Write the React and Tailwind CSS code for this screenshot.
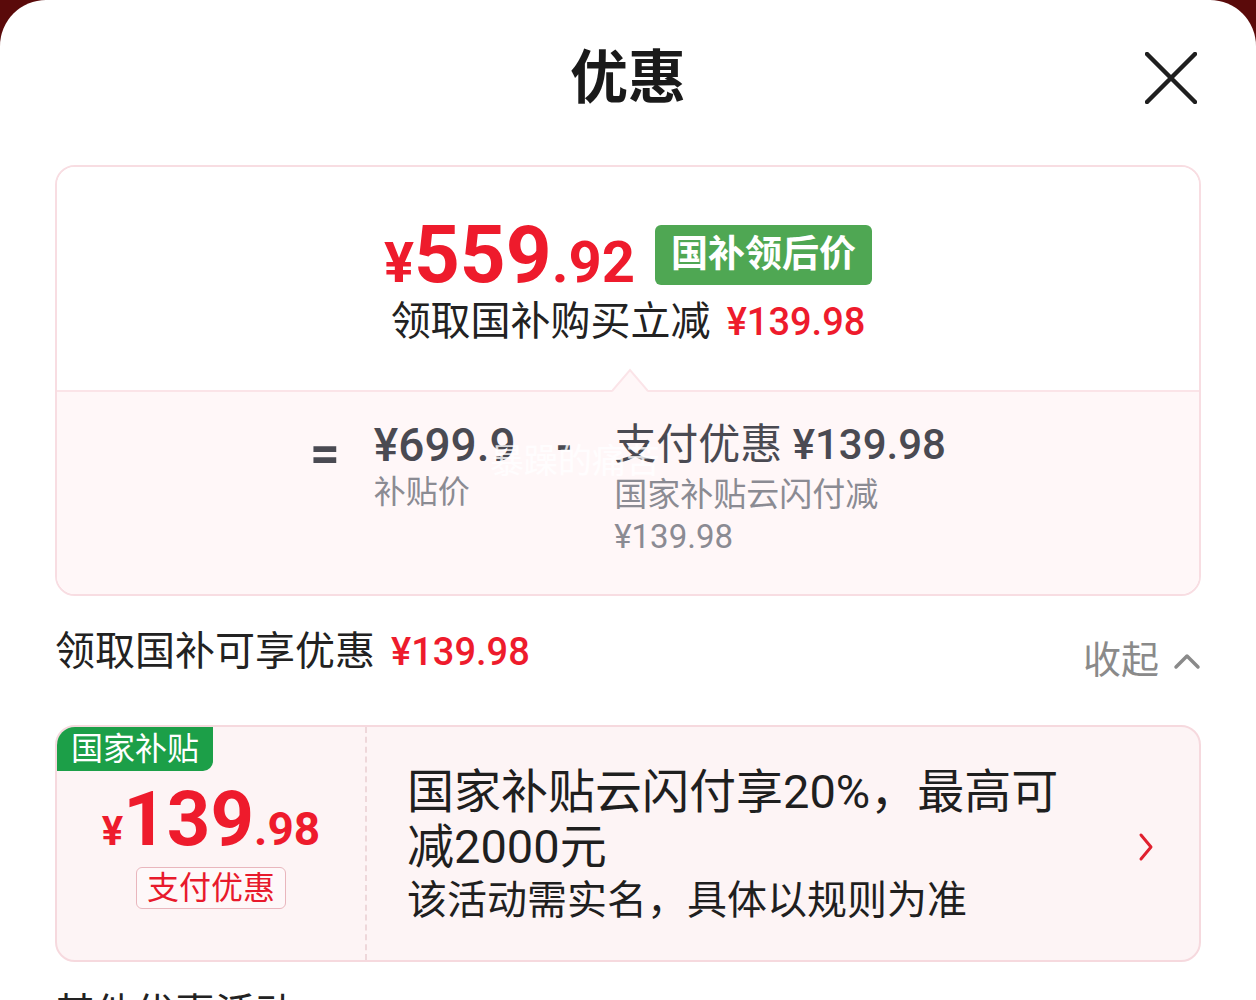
import { useState } from "react";

const Price = ({ big, small, className, yen, bigSize, smallSize }) => (
  <div className={`flex items-baseline font-bold leading-none ${className}`}>
    <span className={yen}>¥</span>
    <span className={bigSize}>{big}</span>
    <span className={smallSize}>{small}</span>
  </div>
);

const CloseIcon = () => (
  <svg width="52" height="52" viewBox="0 0 52 52" fill="none">
    <path d="M2 2 L50 50 M50 2 L2 50" stroke="#1f1f1f" strokeWidth="4.5" strokeLinecap="round" />
  </svg>
);

export default function App() {
  const [open, setOpen] = useState(true);

  return (
    <div className="min-h-screen bg-[#5a0a0a] [font-family:Roboto,'Noto_Sans_CJK_SC',sans-serif]">
      <div className="min-h-[1000px] rounded-t-[46px] bg-white px-[55px]">
        {/* header */}
        <header className="grid h-[156px] grid-cols-[1fr_auto_1fr] items-center">
          <div />
          <h1 className="text-[58px] font-bold text-[#1a1a1a]">优惠</h1>
          <div className="flex justify-end pr-[4px]">
            <button>
              <CloseIcon />
            </button>
          </div>
        </header>

        {/* summary card */}
        <section className="mt-[9px] overflow-hidden rounded-[20px] border-2 border-[#f8dde2]">
          <div className="flex h-[223px] flex-col items-center bg-white pt-[48px]">
            <div className="flex items-center gap-[20px]">
              <Price
                big="559"
                small=".92"
                className="text-[#ee1b2c]"
                yen="text-[56px]"
                bigSize="text-[80px]"
                smallSize="text-[58px]"
              />
              <span className="flex h-[60px] items-center rounded-[6px] bg-[#4fa753] px-[16px] text-[37px] font-bold text-white">
                国补领后价
              </span>
            </div>
            <div className="-mt-[3px] flex items-baseline gap-[16px]">
              <span className="text-[40px] text-[#222]">领取国补购买立减</span>
              <span className="text-[38px] font-medium text-[#ee1b2c]">¥139.98</span>
            </div>
          </div>

          <div className="relative h-[204px] border-t-2 border-[#fbe4e8] bg-[#fff7f8]">
            <svg className="absolute -top-[24px] left-[555px]" width="36" height="24" viewBox="0 0 36 24">
              <path d="M0 24 L18 2 L36 24 Z" fill="#fff7f8" />
              <path d="M0 23 L18 2 L36 23" fill="none" stroke="#fbe4e8" strokeWidth="2" />
            </svg>

            <div className="flex justify-center pt-[28px]">
              <span className="mt-[8px] text-[52px] font-bold leading-none text-[#4a4a52]">=</span>
              <div className="ml-[34px]">
                <div className="text-[46px] font-medium leading-[50px] text-[#4a4a52]">¥699.9</div>
                <div className="text-[32px] leading-[44px] text-[#8b8b93]">补贴价</div>
              </div>
              <span className="ml-[40px] mt-[2px] text-[42px] font-bold leading-[50px] text-[#4a4a52]">-</span>
              <div className="ml-[42px]">
                <div className="text-[42px] leading-[50px] text-[#4a4a52]">
                  支付优惠 <span className="font-medium">¥139.98</span>
                </div>
                <div className="mt-[4px] text-[33px] leading-[42px] text-[#8b8b93]">
                  国家补贴云闪付减
                  <br />
                  ¥139.98
                </div>
              </div>
            </div>

            {/* watermark */}
            <span className="pointer-events-none absolute left-[433px] top-[44px] text-[34px] text-white/80">
              暴躁的痛苦
            </span>
          </div>
        </section>

        {/* subtotal row */}
        <div className="mt-[26px] flex items-start justify-between">
          <div className="flex items-baseline gap-[16px]">
            <span className="text-[40px] text-[#222]">领取国补可享优惠</span>
            <span className="text-[38px] font-medium text-[#ee1b2c]">¥139.98</span>
          </div>
          <button onClick={() => setOpen(!open)} className="mt-[10px] flex items-center gap-[14px] text-[38px] text-[#8a8a8a]">
            收起
            <svg width="28" height="18" viewBox="0 0 28 18" fill="none">
              <path d="M3 15 L14 4 L25 15" stroke="#8a8a8a" strokeWidth="3.5" strokeLinecap="round" strokeLinejoin="round" />
            </svg>
          </button>
        </div>

        {/* coupon card */}
        <section className="mt-[36px] flex h-[237px] overflow-hidden rounded-[20px] border-2 border-[#f6d9de] bg-[#fdf4f5]">
          <div className="flex w-[310px] flex-col border-r-2 border-dashed border-[#eed7da]">
            <span className="self-start rounded-br-[10px] bg-[#1c9f48] px-[14px] text-[32px] leading-[44px] text-white">
              国家补贴
            </span>
            <div className="mt-[10px] flex justify-center">
              <Price
                big="139"
                small=".98"
                className="text-[#ee1b2c]"
                yen="text-[40px]"
                bigSize="text-[76px]"
                smallSize="text-[46px]"
              />
            </div>
            <div className="mt-[10px] flex justify-center">
              <span className="rounded-[6px] border border-[#e9b6bd] bg-white/40 px-[10px] text-[32px] leading-[40px] text-[#e81a2c]">
                支付优惠
              </span>
            </div>
          </div>
          <div className="flex flex-1 items-center pl-[40px] pr-[44px]">
            <div className="flex-1 text-[#1f1f1f]">
              <div className="w-[670px] text-[47px] leading-[55px]">国家补贴云闪付享20%，最高可减2000元</div>
              <div className="mt-[4px] text-[40px] leading-[46px]">该活动需实名，具体以规则为准</div>
            </div>
            <svg className="mt-[6px]" width="18" height="30" viewBox="0 0 18 30" fill="none">
              <path d="M4 3 L14 15 L4 27" stroke="#e0202e" strokeWidth="3" strokeLinecap="round" strokeLinejoin="round" />
            </svg>
          </div>
        </section>

        <h2 className="mt-[22px] text-[40px] text-[#222]">其他优惠活动</h2>
      </div>
    </div>
  );
}
